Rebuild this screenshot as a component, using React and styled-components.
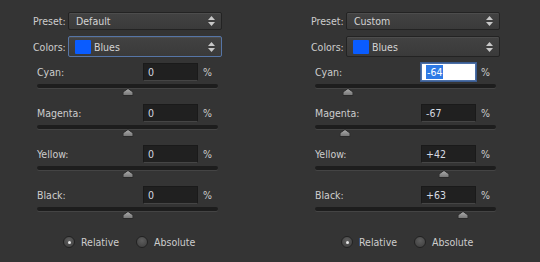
import React from "react";
import styled, { createGlobalStyle, css } from "styled-components";

const GlobalStyle = createGlobalStyle`
  html, body {
    margin: 0;
    background: #343434;
  }
  body {
    font-family: "DejaVu Sans Condensed", "Liberation Sans", sans-serif;
    font-size: 10.5px;
    color: #cdcdcd;
  }
`;

const Page = styled.div`
  display: grid;
  grid-template-columns: 278px 262px;
  width: 540px;
  height: 262px;
  background: #343434;
  overflow: hidden;
`;

const Panel = styled.div`
  display: flex;
  flex-direction: column;
  width: 189px;
  padding: 12px 0 0 33px;
`;

const FieldRow = styled.div`
  display: flex;
  align-items: center;
  gap: 5px;
  margin-bottom: 6px;
`;

const FieldLabel = styled.span`
  width: 30px;
  text-align: right;
  white-space: nowrap;
`;

const Select = styled.div`
  flex: 1;
  height: ${(p) => (p.$focused || p.$swatch ? 19 : 16)}px;
  display: flex;
  align-items: center;
  gap: 3px;
  padding: 0 6px 0 ${(p) => (p.$swatch ? 6 : 7)}px;
  border: 1px solid ${(p) => (p.$focused ? "#5675a6" : "#232323")};
  border-radius: 2px;
  background: linear-gradient(#424242, #3a3a3a);
  box-shadow: inset 0 1px 0 rgba(255, 255, 255, 0.06);
  color: #d4d4d4;
`;

const SelectText = styled.span`
  flex: 1;
`;

const Swatch = styled.span`
  width: 16px;
  height: 14px;
  border-radius: 1px;
  background: #0a5cff;
`;

const SliderRow = styled.div`
  display: flex;
  flex-direction: column;
  height: 41px;
  padding-left: 4px;
  width: 185px;
`;

const ValueLine = styled.div`
  display: flex;
  align-items: center;
  height: 18px;
`;

const SliderLabel = styled.span`
  flex: 1;
`;

const ValueBox = styled.div`
  width: 49px;
  height: 16px;
  padding-left: 4px;
  display: flex;
  align-items: center;
  border: 1px solid #1a1a1a;
  border-bottom-color: #454545;
  background: #202020;
  color: #d6dbe2;
  ${(p) =>
    p.$active &&
    css`
      background: #ffffff;
      border-color: #4c6fa6;
      box-shadow: 0 0 0 1px #3b5c90;
      color: #ffffff;
    `}
`;

const Selection = styled.span`
  background: #2f7ae5;
  padding: 1px 1px;
`;

const Percent = styled.span`
  width: 19px;
  padding-left: 5px;
`;

const Track = styled.div`
  position: relative;
  margin-top: 3px;
  width: 181px;
  height: 4px;
  border-radius: 2px;
  background: #1d1d1d;
  box-shadow: 0 1px 0 #444444;
`;

const Thumb = styled.svg`
  position: absolute;
  top: 4px;
  width: 11px;
  height: 8px;
  transform: translateX(-50%);
`;

const RadioGroup = styled.div`
  display: flex;
  align-items: center;
  gap: 17px;
  margin: 9px 0 0 30px;
`;

const RadioOption = styled.label`
  display: flex;
  align-items: center;
  gap: 6px;
`;

const RadioDot = styled.span`
  width: 12px;
  height: 12px;
  box-sizing: border-box;
  border-radius: 50%;
  border: 1px solid #222222;
  background: radial-gradient(circle at 50% 35%, #5e5e5e, #3c3c3c);
  display: flex;
  align-items: center;
  justify-content: center;
  &::after {
    content: "";
    width: 3px;
    height: 3px;
    border-radius: 50%;
    background: ${(p) => (p.$checked ? "#e6e6e6" : "transparent")};
  }
`;

const Arrows = () => (
  <svg width="7" height="10" viewBox="0 0 7 10">
    <path d="M3.5 0 L7 4 L0 4 Z" fill="#c8c8c8" />
    <path d="M0 6 L7 6 L3.5 10 Z" fill="#c8c8c8" />
  </svg>
);

const Slider = ({ label, value, active }) => {
  const num = Number(value);
  const pos = ((num + 100) / 200) * 181;
  return (
    <SliderRow>
      <ValueLine>
        <SliderLabel>{label}</SliderLabel>
        <ValueBox $active={active}>
          {active ? <Selection>{value}</Selection> : value}
        </ValueBox>
        <Percent>%</Percent>
      </ValueLine>
      <Track>
        <Thumb viewBox="0 0 11 8" style={{ left: pos }}>
          <defs>
            <linearGradient id="thumbFill" x1="0" y1="0" x2="0" y2="1">
              <stop offset="0" stopColor="#b0b0b0" />
              <stop offset="1" stopColor="#737373" />
            </linearGradient>
          </defs>
          <path
            d="M5.5 0.5 L10.5 4 L10.5 7.5 L0.5 7.5 L0.5 4 Z"
            fill="url(#thumbFill)"
            stroke="#2a2a2a"
            strokeWidth="1"
          />
        </Thumb>
      </Track>
    </SliderRow>
  );
};

const panels = [
  {
    preset: "Default",
    focusColors: true,
    sliders: [
      { label: "Cyan:", value: "0" },
      { label: "Magenta:", value: "0" },
      { label: "Yellow:", value: "0" },
      { label: "Black:", value: "0" },
    ],
  },
  {
    preset: "Custom",
    focusColors: false,
    sliders: [
      { label: "Cyan:", value: "-64", active: true },
      { label: "Magenta:", value: "-67" },
      { label: "Yellow:", value: "+42" },
      { label: "Black:", value: "+63" },
    ],
  },
];

const SelectiveColorPanel = ({ preset, focusColors, sliders }) => (
  <Panel>
    <FieldRow>
      <FieldLabel>Preset:</FieldLabel>
      <Select>
        <SelectText>{preset}</SelectText>
        <Arrows />
      </Select>
    </FieldRow>
    <FieldRow>
      <FieldLabel>Colors:</FieldLabel>
      <Select $focused={focusColors} $swatch>
        <Swatch />
        <SelectText>Blues</SelectText>
        <Arrows />
      </Select>
    </FieldRow>
    {sliders.map((s) => (
      <Slider key={s.label} {...s} />
    ))}
    <RadioGroup>
      <RadioOption>
        <RadioDot $checked />
        Relative
      </RadioOption>
      <RadioOption>
        <RadioDot />
        Absolute
      </RadioOption>
    </RadioGroup>
  </Panel>
);

export default function App() {
  return (
    <>
      <GlobalStyle />
      <Page>
        {panels.map((p) => (
          <SelectiveColorPanel key={p.preset} {...p} />
        ))}
      </Page>
    </>
  );
}
